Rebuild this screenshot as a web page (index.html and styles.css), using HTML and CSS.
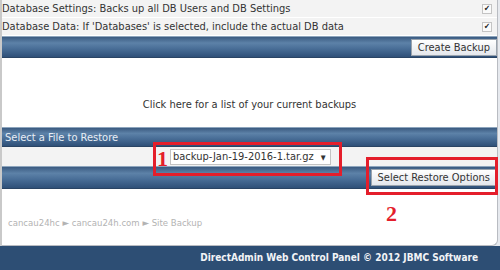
FILE: index.html
```html
<!DOCTYPE html>
<html lang="en">
<head>
  <meta charset="UTF-8">
  <title>Site Backup</title>
  <link rel="stylesheet" href="styles.css">
</head>
<body>
  <div class="panel">
    <div class="opt-row">
      <span>Database Settings: Backs up all DB Users and DB Settings</span>
      <span class="check">&#10004;</span>
    </div>
    <div class="opt-row">
      <span>Database Data: If 'Databases' is selected, include the actual DB data</span>
      <span class="check">&#10004;</span>
    </div>
    <div class="bar bar-btn">
      <button class="btn">Create Backup</button>
    </div>

    <div class="list-link">
      <a href="#">Click here for a list of your current backups</a>
    </div>

    <div class="bar bar-title">Select a File to Restore</div>
    <div class="select-row">
      <span class="fake-select">backup-Jan-19-2016-1.tar.gz <span class="arrow">&#9660;</span></span>
    </div>
    <div class="bar bar-btn bar-tall">
      <button class="btn">Select Restore Options</button>
    </div>

    <div class="crumbs">cancau24hc &#9658; cancau24h.com &#9658; Site Backup</div>

    <!-- red annotation boxes drawn over the screenshot -->
    <div class="mark mark-1"></div>
    <div class="num num-1">1</div>
    <div class="mark mark-2"></div>
    <div class="num num-2">2</div>
  </div>

  <div class="footer">DirectAdmin Web Control Panel &copy; 2012 JBMC Software</div>
</body>
</html>
```

FILE: styles.css
```css
* {
  margin: 0;
  padding: 0;
  box-sizing: border-box;
}

body {
  width: 500px;
  height: 270px;
  overflow: hidden;
  background: #e6e9ee;
  font-family: "DejaVu Sans Condensed", "DejaVu Sans", sans-serif;
  font-size: 11px;
  color: #333;
}

.panel {
  position: relative;
  width: 498px;
  height: 246px;
  background: #fff;
  border-left: 2px solid #c9c9c9;
  border-right: 1px solid #b9bcc2;
  border-bottom: 1px solid #b9bcc2;
  border-radius: 0 0 6px 0;
}

.opt-row {
  display: flex;
  justify-content: space-between;
  align-items: center;
  height: 18px;
  padding: 0 5px 0 0;
  background: #f3f3f3;
  border-bottom: 1px solid #fff;
}

.check {
  width: 10px;
  height: 10px;
  border: 1px solid #c4c4c4;
  background: #fafafa;
  font-size: 8px;
  line-height: 8px;
  text-align: center;
  color: #222;
}

.bar {
  display: flex;
  align-items: center;
  height: 22px;
  background: linear-gradient(#3a5a80 0%, #5d82a8 30%, #4b7099 55%, #2f5078 100%);
  border-top: 1px solid #8da5bd;
  border-bottom: 1px solid #2a4464;
}

.bar-btn {
  justify-content: flex-end;
}

.bar-tall {
  height: 23px;
}

.bar-title {
  height: 20px;
  padding-left: 3px;
  color: #e8eef5;
}

.btn {
  height: 17px;
  padding: 0 6px;
  background: linear-gradient(#ffffff, #e4e7ec);
  border: 1px solid #9aa3ad;
  font-family: "DejaVu Sans Condensed", "DejaVu Sans", sans-serif;
  font-size: 11px;
  color: #333;
}

.list-link {
  height: 69px;
  padding-top: 40px;
  text-align: center;
}

.list-link a {
  color: #333;
  text-decoration: none;
}

.select-row {
  display: flex;
  align-items: center;
  height: 19px;
  padding-left: 168px;
  background: #f3f3f3;
}

.fake-select {
  height: 16px;
  padding: 0 4px 0 2px;
  background: #fff;
  border: 1px solid #c3c3c3;
  line-height: 14px;
}

.arrow {
  font-size: 7px;
  margin-left: 4px;
}

.crumbs {
  padding: 28px 0 0 6px;
  color: #b3b3b3;
  font-size: 9.5px;
}

.mark {
  position: absolute;
  border: 3px solid #e41e2b;
}

.mark-1 {
  left: 151px;
  top: 142px;
  width: 189px;
  height: 34px;
}

.mark-2 {
  left: 364px;
  top: 157px;
  width: 132px;
  height: 38px;
}

.num {
  position: absolute;
  font-family: "Liberation Serif", serif;
  font-weight: bold;
  color: #e41e2b;
  line-height: 1;
  font-size: 22px;
}

.num-1 {
  left: 155px;
  top: 148px;
}

.num-2 {
  left: 384px;
  top: 203px;
}

.footer {
  height: 24px;
  padding-right: 22px;
  background: #2d4e74;
  color: #f2f4f7;
  font-weight: bold;
  font-size: 10px;
  line-height: 24px;
  text-align: right;
}
```
